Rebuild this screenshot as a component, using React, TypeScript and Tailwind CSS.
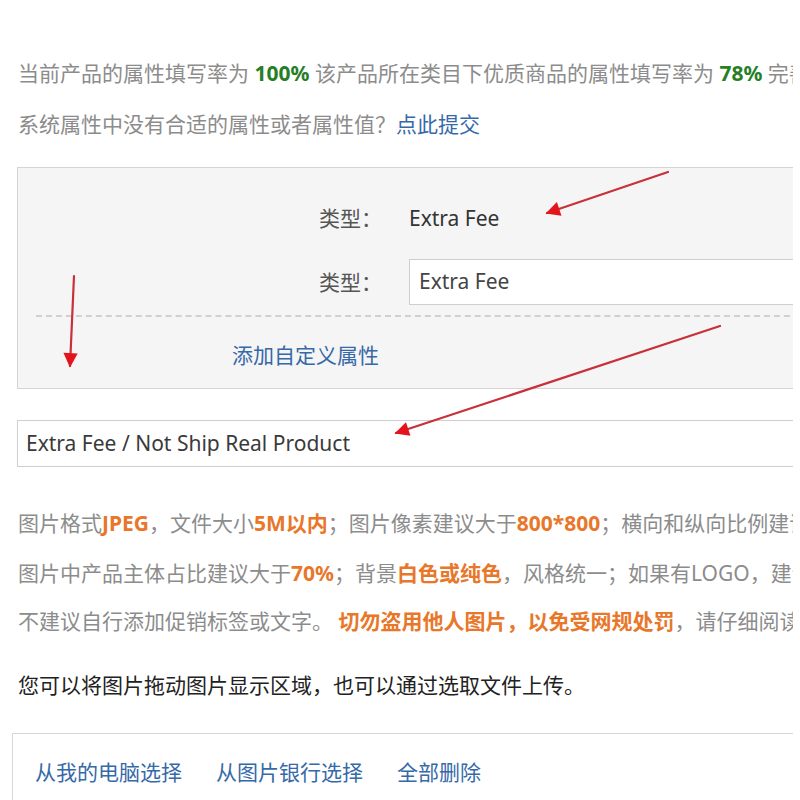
import React from 'react'

const FONT = "font-['Noto_Sans','Noto_Sans_CJK_SC',sans-serif]"

function Hi({ children }: { children: React.ReactNode }) {
  return <span className="font-bold text-[#e8772a]">{children}</span>
}

function Arrows() {
  return (
    <svg className="pointer-events-none absolute left-0 top-0" width="800" height="800" viewBox="0 0 800 800">
      <defs>
        <marker id="head" viewBox="0 0 10 10" refX="9" refY="5" markerWidth="8" markerHeight="6.5" orient="auto-start-reverse" markerUnits="strokeWidth">
          <path d="M0 0 L10 5 L0 10 z" fill="#e3141b" />
        </marker>
      </defs>
      <g stroke="#c8303a" strokeWidth="2.2" fill="none" strokeLinecap="round">
        <line x1="668" y1="172" x2="547" y2="213" markerEnd="url(#head)" />
        <line x1="74" y1="276" x2="70" y2="366" markerEnd="url(#head)" />
        <line x1="720" y1="326" x2="396" y2="433" markerEnd="url(#head)" />
      </g>
    </svg>
  )
}

export default function App() {
  return (
    <div className={`relative h-[800px] w-[800px] overflow-hidden bg-white ${FONT}`}>
      <div className="w-[793px] overflow-hidden">
        <div className="w-[1100px]">
          <p className="mt-[59px] pl-[18px] text-[21px] leading-[28px] text-[#8c8c8c] whitespace-nowrap">
            当前产品的属性填写率为 <span className="font-bold text-[#267f26]">100%</span> 该产品所在类目下优质商品的属性填写率为{' '}
            <span className="font-bold text-[#267f26]">78%</span> 完善属性可以提升商品曝光
          </p>
          <p className="mt-[23px] pl-[18px] text-[21px] leading-[28px] text-[#8c8c8c] whitespace-nowrap">
            系统属性中没有合适的属性或者属性值？<span className="text-[#3669a8]">点此提交</span>
          </p>

          <div className="ml-[17px] mt-[29px] h-[222px] border border-[#d4d4d4] bg-[#f5f5f5]">
            <div className="mt-[36px] flex items-center">
              <span className="w-[364px] text-right text-[21px] leading-[28px] text-[#555]">类型：</span>
              <span className="ml-[27px] text-[21px] leading-[28px] text-[#333]">Extra Fee</span>
            </div>
            <div className="mt-[27px] flex items-center">
              <span className="w-[364px] text-right text-[21px] leading-[28px] text-[#555]">类型：</span>
              <div className="ml-[27px] flex h-[46px] flex-1 items-center border border-[#cfcfcf] bg-white pl-[9px] text-[21px] text-[#444]">
                Extra Fee
              </div>
            </div>
            <div className="ml-[18px] mt-[10px] border-t-2 border-dashed border-[#d0d0d0]" />
            <p className="mt-[24px] pl-[214px] text-[21px] leading-[28px] text-[#3669a8]">添加自定义属性</p>
          </div>

          <div className="ml-[17px] mt-[31px] flex h-[47px] items-center border border-[#cfcfcf] bg-white pl-[8px] text-[21px] text-[#3a3a3a]">
            Extra Fee / Not Ship Real Product
          </div>

          <div className="mt-[42px] pl-[18px] text-[21px] text-[#8c8c8c] whitespace-nowrap">
            <p className="leading-[28px]">
              图片格式<Hi>JPEG</Hi>，文件大小<Hi>5M以内</Hi>；图片像素建议大于<Hi>800*800</Hi>；横向和纵向比例建议1:1到1:1.3之间
            </p>
            <p className="mt-[22px] leading-[28px]">
              图片中产品主体占比建议大于<Hi>70%</Hi>；背景<Hi>白色或纯色</Hi>，风格统一；如果有LOGO，建议放置在左上角
            </p>
            <p className="mt-[20px] leading-[28px]">
              不建议自行添加促销标签或文字。 <Hi>切勿盗用他人图片，以免受网规处罚</Hi>，请仔细阅读规则
            </p>
            <p className="mt-[36px] leading-[28px] text-[#222]">您可以将图片拖动图片显示区域，也可以通过选取文件上传。</p>
          </div>

          <div className="ml-[12px] mt-[34px] h-[120px] border border-[#d6d6d6] bg-white">
            <div className="mt-[24px] flex gap-[34px] pl-[22px] text-[21px] leading-[28px] text-[#3669a8]">
              <span>从我的电脑选择</span>
              <span>从图片银行选择</span>
              <span>全部删除</span>
            </div>
          </div>
        </div>
      </div>
      <Arrows />
    </div>
  )
}
